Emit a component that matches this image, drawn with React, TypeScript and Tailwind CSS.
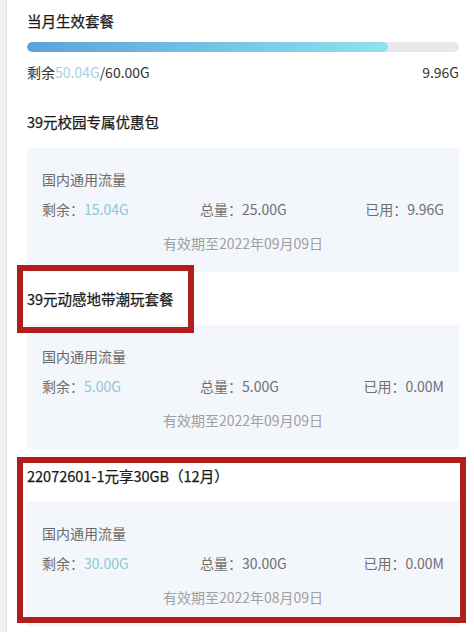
import React from 'react';

type Plan = {
  title: string;
  left: string;
  total: string;
  used: string;
  expire: string;
};

const plans: Plan[] = [
  { title: '39元校园专属优惠包', left: '15.04G', total: '25.00G', used: '9.96G', expire: '有效期至2022年09月09日' },
  { title: '39元动感地带潮玩套餐', left: '5.00G', total: '5.00G', used: '0.00M', expire: '有效期至2022年09月09日' },
  { title: '22072601-1元享30GB（12月）', left: '30.00G', total: '30.00G', used: '0.00M', expire: '有效期至2022年08月09日' },
];

const font = { fontFamily: '"Noto Sans CJK SC", "Noto Sans", sans-serif' };

const PlanBlock: React.FC<{ plan: Plan }> = ({ plan }) => {
  return (
    <div>
      <div className="h-[53px] flex items-center text-[14.5px] text-[#1a1a1a] [-webkit-text-stroke:0.25px_#1a1a1a]">{plan.title}</div>
      <div className="h-[124px] bg-[#f3f6fa] pt-[21px] px-[15px] text-[14px]">
        <div className="h-[20px] flex items-center text-[#6a6a6a]">国内通用流量</div>
        <div className="h-[20px] mt-[10px] flex items-center text-[#707070]">
          <div className="w-[158px]">
            剩余：<span className="text-[#8ec6d8]">{plan.left}</span>
          </div>
          <div className="w-[160px]">总量：{plan.total}</div>
          <div className="flex-1 text-right">已用：{plan.used}</div>
        </div>
        <div className="h-[20px] mt-[14px] flex items-center justify-center text-[#a0a0a0]">{plan.expire}</div>
      </div>
    </div>
  );
};

const App: React.FC = () => {
  return (
    <div className="relative flex w-[474px] h-[632px] overflow-hidden bg-white" style={font}>
      <div className="w-[7px] shrink-0 bg-[#eef0f2] border-r border-[#dde0e3]" />
      <div className="flex-1 pl-[20px] pr-[15px]">
        <div className="h-[95px]">
          <div className="h-[42px] flex items-center text-[14.5px] text-[#1a1a1a] [-webkit-text-stroke:0.25px_#1a1a1a]">当月生效套餐</div>
          <div className="h-[10px] rounded-full bg-[#e9e9eb] overflow-hidden">
            <div className="h-full w-[83.5%] rounded-full bg-gradient-to-r from-[#5da2da] to-[#8fe1ef]" />
          </div>
          <div className="h-[40px] flex items-center justify-between text-[14px] text-[#333]">
            <div>
              剩余<span className="text-[#a3d2e6]">50.04G</span>/60.00G
            </div>
            <div>9.96G</div>
          </div>
        </div>
        {plans.map((p) => (
          <PlanBlock key={p.title} plan={p} />
        ))}
      </div>
      <div className="absolute left-[17px] top-[265px] w-[177px] h-[68px] border-[6px] border-[#b01f1b]" />
      <div className="absolute left-[17px] top-[457px] w-[449px] h-[166px] border-[6px] border-[#b01f1b]" />
    </div>
  );
};

export default App;
